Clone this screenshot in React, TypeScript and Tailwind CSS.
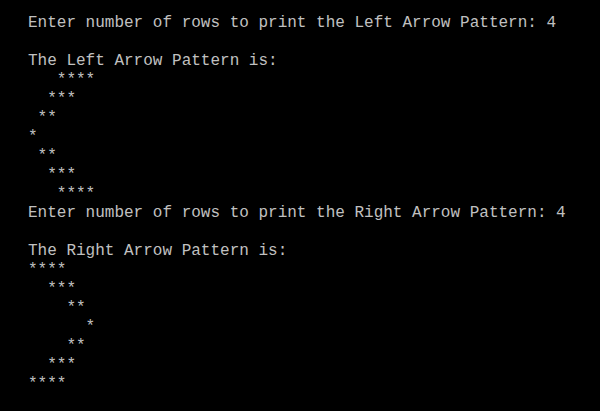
const lines = [
  "Enter number of rows to print the Left Arrow Pattern: 4",
  "",
  "The Left Arrow Pattern is:",
  "   ****",
  "  ***",
  " **",
  "*",
  " **",
  "  ***",
  "   ****",
  "Enter number of rows to print the Right Arrow Pattern: 4",
  "",
  "The Right Arrow Pattern is:",
  "****",
  "  ***",
  "    **",
  "      *",
  "    **",
  "  ***",
  "****",
];

export default function App() {
  return (
    <div className="w-[600px] h-[411px] bg-black overflow-hidden pt-[14px] pl-[28px] font-['Liberation_Mono',monospace] text-[16px] leading-[19px] text-[#c0c0c0]">
      {lines.map((line, i) => (
        <div key={i} className="h-[19px] whitespace-pre">
          {line}
        </div>
      ))}
    </div>
  );
}
